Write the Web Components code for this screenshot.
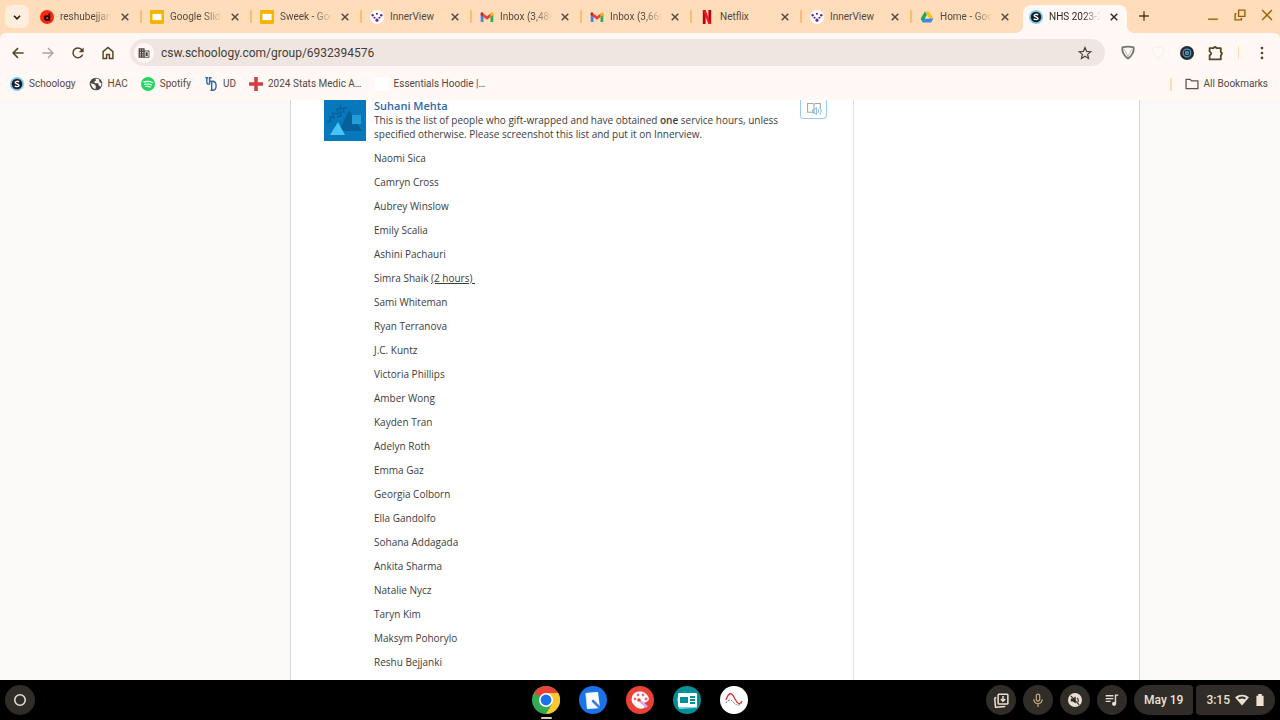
<!DOCTYPE html>
<html lang="en">
<head>
<meta charset="utf-8">
<title>NHS 2023-2024</title>
<style>
html,body{margin:0;height:100%}
body{font-family:Roboto,"Liberation Sans",sans-serif;font-size:10px;color:#54483f;overflow:hidden}
</style>
</head>
<body>
<desktop-screen></desktop-screen>
<script>
const schoology='<circle cx="10" cy="10" r="10" fill="#7ccdf0"/><circle cx="10" cy="10" r="7.600" fill="#181d26"/><path d="M13 7.200C11.500 5.600 7.200 5.900 7.400 8c.2 2 5.400 1.700 5.400 4 0 2.200-4.400 2.300-6.100.600" fill="none" stroke="#fff" stroke-width="2"/>';
const ICONS={
chevron:'<path d="M5 8l5 5 5-5" fill="none" stroke="#241a12" stroke-width="2.600"/>',
close:'<path d="M4.500 4.500l11 11m0-11l-11 11" stroke="currentColor" stroke-width="2.400"/>',
plus:'<path d="M10 2v16M2 10h16" stroke="#4d3820" stroke-width="2.200"/>',
doordash:'<circle cx="10" cy="10" r="10" fill="#ff2a0c"/><path d="M12.200 4.500h2.500v11H9.500a4 4 0 0 1 0-8h2.700zM11.700 10H10a1.500 1.500 0 0 0 0 3h1.700z" fill="#1c0502" fill-rule="evenodd"/>',
slides:'<rect width="20" height="20" rx="2" fill="#f5b400"/><rect x="3.500" y="5.500" width="13" height="9" fill="#fff"/>',
inner:'<circle cx="10" cy="10" r="10" fill="#fff"/><g fill="#65249b"><circle cx="3.800" cy="7.500" r="1.700"/><circle cx="16.200" cy="7.500" r="1.700"/><circle cx="10" cy="5.500" r="1.500"/><circle cx="6.500" cy="11" r="1.500"/><circle cx="13.500" cy="11" r="1.500"/><circle cx="10" cy="14.500" r="2.200"/></g>',
gmail:'<path d="M1 5v12h4V8z" fill="#4285f4"/><path d="M15 8v9h4V5z" fill="#34a853"/><path d="M1 5v2l4 3V5L3.500 3.500C2 3 1 4 1 5z" fill="#c5221f"/><path d="M15 5v5l4-3V5c0-1-1-2-2.500-1.500z" fill="#fbbc04"/><path d="M5 5l5 4 5-4v5l-5 4-5-4z" fill="#ea4335"/>',
netflix:'<path d="M4 0h4v20H4zM12 0h4v20h-4z" fill="#b1060f"/><path d="M4 0h4l8 20h-4z" fill="#f01723"/>',
drive:'<path d="M7 2h6l6 10h-6z" fill="#fcc01d"/><path d="M4 12h15l-3 6H4l-3-6z" fill="#4285f4"/><path d="M7 2l3 5-6 11-3-6z" fill="#22a565"/><path d="M10 7l3 5H7z" fill="#ffddba"/>',
schoology,
minimize:'<path d="M3 16h14" stroke="#9a6100" stroke-width="2"/>',
restore:'<path d="M8 3h9v9H8zM3 8v9h9v-3M3 8h2" fill="none" stroke="#9a6100" stroke-width="2"/>',
closewin:'<path d="M3 3l14 14M17 3L3 17" stroke="#9a6100" stroke-width="2"/>',
back:'<path d="M18 10H3M10 3l-7 7 7 7" fill="none" stroke="#584326" stroke-width="2.200"/>',
forward:'<path d="M2 10h15M10 3l7 7-7 7" fill="none" stroke="#aaa19b" stroke-width="2"/>',
reload:'<path d="M16.500 12A7 7 0 1 1 15 5l2 2" fill="none" stroke="#584326" stroke-width="2.200"/><path d="M18 2v7h-7z" fill="#584326"/>',
home:'<path d="M3 8l7-6 7 6v10h-5v-6H8v6H3z" fill="none" stroke="#584326" stroke-width="2.100"/>',
site:'<path d="M1 2h10v4h8v12H1z" fill="#4a4440"/><path d="M3 5h2m2 0h2M3 9h2m2 0h2M3 12h2m2 0h2M3 15h2m2 0h2m3-7h5v8h-5z" stroke="#fff8f5" stroke-width="1.500" fill="none"/><path d="M13 11h2m-2 3h2" stroke="#4a4440" stroke-width="1.500"/>',
star:'<path d="M10 2l2.300 5.600 6 .5-4.600 3.900 1.400 5.900L10 14.700l-5.100 3.200L6.300 12 1.700 8.100l6-.5z" fill="none" stroke="#4e453f" stroke-width="1.700"/>',
shield:'<path d="M3 3q7-2 14 0c1 6-3 11-7 14C6 14 2 9 3 3z" fill="none" stroke="#77736f" stroke-width="2.300"/><path d="M5 5l5 9 5-9" fill="none" stroke="#b9b4b0"/>',
ghost:'<path d="M3 5q7-6 14 0 1 6-7 12Q2 11 3 5z" fill="none" stroke="#f5f2ef" stroke-width="2"/>',
target:'<circle cx="10" cy="10" r="10" fill="#262b32"/><circle cx="10" cy="10" r="5.500" fill="none" stroke="#4d9bc0" stroke-width="1.700"/><circle cx="10" cy="10" r="2" fill="none" stroke="#68b9de" stroke-width="1.600"/>',
puzzle:'<path d="M2 4h5q1-3 4 0h5v5q3 1 0 4v5H2v-5q4-2 0-5z" fill="none" stroke="#584326" stroke-width="2.200" stroke-linejoin="round"/>',
dots:'<g fill="#584326"><circle cx="10" cy="3" r="1.900"/><circle cx="10" cy="10" r="1.900"/><circle cx="10" cy="17" r="1.900"/></g>',
globe:'<circle cx="10" cy="10" r="9" fill="#45474a"/><path d="M2 9l5 1 3 3-1 5-4-3zM9 2l1 3-3 2 2 2 4 0 1 3 3 2 1-5-3-2-1-4z" fill="#fff4ef"/>',
spotify:'<circle cx="10" cy="10" r="10" fill="#1ed760"/><path d="M4 7q7-2 12 1M5 10.500q6-1.500 10 1M6 13.500q4-1 7.500 1" fill="none" stroke="#fff" stroke-width="1.600" stroke-linecap="round"/>',
ud:'<path d="M2 1h4M4 1v6q0 4 4 3V1M7 1h4M9 6h3c7 0 7 13 0 13H9m2-13v13" fill="none" stroke="#2c68ad" stroke-width="2"/>',
cross:'<path d="M7.500 0h5v7.500H20v5h-7.500V20h-5v-7.500H0v-5h7.500z" fill="#cf3f46"/>',
blank:'<rect width="20" height="20" rx="2" fill="#fff"/>',
folder:'<path d="M1.500 3.500h6l2 2h9v11h-17z" fill="none" stroke="#5e544e" stroke-width="1.800" stroke-linejoin="round"/>',
reader:'<path d="M10 4v11l-2-1H2V3h6zM10 4l2-1h6v6" fill="none" stroke="#aaa6a2" stroke-width="1.300"/><path d="M8 11h2l3-3v9l-3-3H8zM15 10q2 2 0 5m2-7q4 4 0 9" fill="none" stroke="#7eb7e5" stroke-width="1.200"/>',
avatar:'<rect width="42" height="41" fill="#0878bc"/><path d="M25 10L38 31H15z" fill="#06619b"/><path d="M14 22L21 35H6z" fill="#47c3f7"/><path d="M28 15h9v9h-9z" fill="#239cd8"/><path d="M3 22l4-1-1-4 4 1-1-5 5 1-1-5 4 0-1-4M13 17l4-1-1-4 4 0-1-4 4 0" fill="none" stroke="#075f99" stroke-width="1.300"/>',
chrome:'<circle cx="14" cy="14" r="14" fill="#34a853"/><path d="M14 14L2 7a14 14 0 0 1 24.200 0z" fill="#ea4335"/><path d="M14 7h12.200A14 14 0 0 1 14 28l6-10z" fill="#fbc72f"/><circle cx="14" cy="14" r="7" fill="#fff"/><circle cx="14" cy="14" r="5.400" fill="#1a73e8"/>',
notes:'<circle cx="14" cy="14" r="14" fill="#1a73e8"/><path d="M6 7l12-1 3 16-13 1z" fill="#8db9f8"/><path d="M7 7l12-1 2 16-13 1z" fill="#f7faff"/><path d="M14 15l6 6" stroke="#3c7ddb" stroke-width="2.500" stroke-linecap="round"/>',
palette:'<circle cx="14" cy="14" r="14" fill="#ea4035"/><path d="M6 11c1-5 8-7 13-4 5 4 5 8 1 9-3 1-2 2-1 4 1 3-7 4-10 0-3-3-4-5-3-9z" fill="#fff"/><g fill="#ef6a7c"><circle cx="12" cy="9" r="1.400"/><circle cx="9" cy="13" r="1.400"/><circle cx="17" cy="9" r="1.400"/><circle cx="20" cy="13" r="1.400"/></g><path d="M14 15l7 6" stroke="#dca4f3" stroke-width="2.500"/><circle cx="13" cy="14" r="1.800" fill="#ea4035"/>',
card:'<circle cx="14" cy="14" r="14" fill="#009198"/><path d="M4 12l19-3 1 13-18 1z" fill="#80d0f1"/><rect x="5" y="7" width="19" height="14" rx="1" fill="#fff"/><path d="M7 11h8v6H7zM17 10h5v2h-5zM17 13h5v2h-5zM17 16h5v2h-5z" fill="#009198"/>',
graph:'<circle cx="14" cy="14" r="14" fill="#fff"/><path d="M6 14q4-12 9-1 4 8 7 2" fill="none" stroke="#d83030" stroke-width="1.300"/><path d="M6 17q4-6 8 0 4 4 8 0" fill="none" stroke="#777" stroke-dasharray="2 1"/>',
ring:'<circle cx="10" cy="10" r="7.500" fill="none" stroke="#e8dfd2" stroke-width="2.200"/>',
holding:'<rect x="5.500" y="1.500" width="13" height="13" rx="1" fill="none" stroke="#eee1d2" stroke-width="2"/><path d="M3 6l-2 1 1 12 13-1M12 4v6m-3-2l3 3 3-3" fill="none" stroke="#eee1d2" stroke-width="2"/>',
mic:'<rect x="7.500" y="1.500" width="5" height="10" rx="2.500" fill="none" stroke="#c8ae7e" stroke-width="1.700"/><path d="M4 9q0 6 6 6t6-6M10 15v5" fill="none" stroke="#c8ae7e" stroke-width="1.700"/>',
mute:'<circle cx="10" cy="10" r="10" fill="#e9dfd4"/><path d="M4 8h3l4-3v10l-4-3H4z" fill="#302c28"/><path d="M4 4l12 13M13 7q3 3 1 6" stroke="#302c28" stroke-width="1.500" fill="none"/>',
queue:'<path d="M1 4h11M1 8h11M1 12h7M15 15V3h4" fill="none" stroke="#e9dfd4" stroke-width="2"/><circle cx="13" cy="15.500" r="3" fill="#e9dfd4"/>',
wifi:'<path d="M0 6Q10-1 20 6L10 18z" fill="#eee1d2"/><path d="M4 7q6-4 12 0l-2 2q-4-2-8 0z" fill="#302c28"/>',
battery:'<path d="M7 0h6v3h3v17H4V3h3z" fill="#eee1d2"/>'
};
function component(name,css,markup){
  const t=document.createElement('template');
  t.innerHTML=`<style>*{box-sizing:border-box}button{font:inherit;color:inherit;background:none;border:0;padding:0;margin:0}${css}</style>${markup}`;
  customElements.define(name,class extends HTMLElement{
    constructor(){
      super();
      this.attachShadow({mode:'open'}).append(t.content.cloneNode(true));
    }
  });
}
customElements.define('ui-icon',class extends HTMLElement{
  connectedCallback(){
    if(this.shadowRoot)return;
    const w=this.getAttribute('size')||14,box=this.getAttribute('box')||'0 0 20 20';
    const [, , bw, bh]=box.split(' ').map(Number);
    this.attachShadow({mode:'open'}).innerHTML=`<style>:host{display:block;flex:none}svg{display:block}</style><svg aria-hidden="true" width="${w}" height="${Math.round(w*bh/bw)}" viewBox="${box}">${ICONS[this.getAttribute('name')]}</svg>`;
  }
});
customElements.define('browser-tab',class extends HTMLElement{
  connectedCallback(){
    if(this.shadowRoot)return;
    const on=this.hasAttribute('active');
    this.attachShadow({mode:'open'}).innerHTML=`<style>
    :host{display:flex;position:relative;align-items:center;flex:0 1 110px;min-width:0;height:28px;padding:0 10px 5px 9px;box-sizing:border-box}
    :host([divided])::before{content:"";position:absolute;left:-1px;top:5px;width:2px;height:13px;background:#fdbb70;border-radius:1px}
    :host([active]){background:#fff8f5;border-radius:8px 8px 0 0;flex-basis:104px;margin-left:2px;padding:0 7px 5px 6px;color:#32271f}
    :host([active])::before,:host([active])::after{content:"";position:absolute;bottom:0;width:8px;height:8px;background:radial-gradient(circle at 0 0,transparent 8px,#fff8f5 8px)}
    :host([active])::before{left:-8px}:host([active])::after{right:-8px;background:radial-gradient(circle at 100% 0,transparent 8px,#fff8f5 8px)}
    button{font:inherit;color:inherit;background:none;border:0;padding:0}
    .t{display:flex;align-items:center;gap:6px;flex:1;min-width:0;text-align:left}
    .t span{flex:1;white-space:nowrap;overflow:hidden;line-height:14px}
    :host([plain]) .t span{-webkit-mask-image:none}
    .t span.fade{-webkit-mask-image:linear-gradient(90deg,#000 calc(100% - 18px),transparent)}
    .c{margin-left:7px}</style>
    <button class="t" role="tab" aria-selected="${on}"><ui-icon name="${this.getAttribute('icon')}"></ui-icon><span><slot></slot></span></button>
    <button class="c" aria-label="Close tab"><ui-icon name="close" size="12"></ui-icon></button>`;
    const label=this.shadowRoot.querySelector('span');
    new ResizeObserver(()=>label.classList.toggle('fade',label.scrollWidth>label.clientWidth)).observe(label);
  }
});
component('tab-strip',`:host{display:flex;height:33px;padding:5px 6px 0 5px;background:#ffddba;box-sizing:border-box}
.menu{width:24px;height:23px;border-radius:7px;background:#ffeedd;display:grid;place-items:center;margin-right:2px;flex:none}
.tabs{display:flex;flex:0 1 1096px;min-width:0}.new{align-self:flex-start;padding:5px 11px}
.win{display:flex;gap:13px;margin-left:auto;align-self:flex-start;padding-top:3px}`,
`<button class="menu" aria-label="Search tabs"><ui-icon name="chevron" size="12"></ui-icon></button>
<div class="tabs" role="tablist">
<browser-tab icon="doordash">reshubejjanki</browser-tab><browser-tab divided icon="slides">Google Slides</browser-tab><browser-tab divided icon="slides">Sweek - Google</browser-tab><browser-tab divided icon="inner">InnerView</browser-tab><browser-tab divided icon="gmail">Inbox (3,486)</browser-tab><browser-tab divided icon="gmail">Inbox (3,666)</browser-tab><browser-tab divided icon="netflix">Netflix</browser-tab><browser-tab divided icon="inner">InnerView</browser-tab><browser-tab divided icon="drive">Home - Google</browser-tab><browser-tab active icon="schoology">NHS 2023-2024</browser-tab>
</div><button class="new" aria-label="New tab"><ui-icon name="plus" size="12"></ui-icon></button>
<div class="win"><button aria-label="Minimize"><ui-icon name="minimize"></ui-icon></button><button aria-label="Restore"><ui-icon name="restore"></ui-icon></button><button aria-label="Close window"><ui-icon name="closewin"></ui-icon></button></div>`);
component('address-bar',`:host{display:flex;align-items:center;height:39px;padding:0 11px;background:#fff8f5;border-radius:6px 6px 0 0;box-sizing:border-box}
.nav,.ext{display:flex;align-items:center;gap:16px}.box{display:flex;align-items:center;flex:1;height:27px;margin:0 15px;padding:0 13px 0 4px;background:#efe6e1;border-radius:14px}
.site{width:20px;height:20px;border-radius:50%;background:#fff8f5;display:grid;place-items:center;margin-right:7px}
input{flex:1;min-width:0;border:0;padding:0;background:none;font:12px/20px Roboto,sans-serif;color:#453d38;height:20px}
i{width:1px;height:13px;background:#ffddba}.ext{gap:14px}.sep{display:flex;align-items:center;gap:16px}`,
`<div class="nav"><button aria-label="Back"><ui-icon name="back"></ui-icon></button><button aria-label="Forward"><ui-icon name="forward"></ui-icon></button><button aria-label="Reload"><ui-icon name="reload"></ui-icon></button><button aria-label="Home"><ui-icon name="home"></ui-icon></button></div>
<div class="box"><button class="site" aria-label="Site information"><ui-icon name="site" size="12"></ui-icon></button><input aria-label="Address" value="csw.schoology.com/group/6932394576"><button aria-label="Bookmark this page"><ui-icon name="star"></ui-icon></button></div>
<div class="ext"><button aria-label="Shield extension"><ui-icon name="shield" size="16"></ui-icon></button><button aria-label="Extension"><ui-icon name="ghost" size="16"></ui-icon></button><button aria-label="Reader extension"><ui-icon name="target"></ui-icon></button><button aria-label="Extensions"><ui-icon name="puzzle" size="16"></ui-icon></button><div class="sep"><i></i><button aria-label="Menu"><ui-icon name="dots"></ui-icon></button></div></div>`);
component('bookmark-link',`:host{display:block}a{display:flex;align-items:center;gap:5px;color:inherit;text-decoration:none;line-height:14px;white-space:nowrap}`,
`<a href="#"><slot name="icon"></slot><span><slot></slot></span></a>`);
component('bookmark-bar',`:host{display:flex;align-items:center;height:28px;gap:13px;padding:0 12px 4px 10px;background:#fff8f5;box-sizing:border-box}i{width:2px;height:13px;background:#ffddba;margin-left:auto}`,
['schoology:Schoology','globe:HAC','spotify:Spotify','ud:UD','cross:2024 Stats Medic A…','blank:Essentials Hoodie |…'].map(s=>{const [a,b]=s.split(':');return `<bookmark-link><ui-icon slot="icon" name="${a}"></ui-icon>${b}</bookmark-link>`}).join('')+`<i></i><bookmark-link><ui-icon slot="icon" name="folder"></ui-icon>All Bookmarks</bookmark-link>`);
component('group-post',`:host{display:grid;grid-template-columns:42px minmax(0,1fr) 27px;column-gap:8px;padding:0 26px 0 33px;align-items:start;font:10px/14px "Open Sans",sans-serif;color:#3c3c3c}
h2{margin:0 0 2px;font-size:11px;line-height:11px;font-weight:600}h2 a{color:#3069a8;text-decoration:none}b{font-weight:600}
.body{padding-right:6px}.body p{margin:0}ul{list-style:none;margin:10px 0 0;padding:0;display:grid;gap:10px}
.read{height:19px;border:1px solid #9accf3;border-top:0;border-radius:0 0 4px 4px;display:grid;place-items:center}`,
`<ui-icon name="avatar" size="42" box="0 0 42 41"></ui-icon><div class="body"><h2><a href="#">Suhani Mehta</a></h2><p>This is the list of people who gift-wrapped and have obtained <b>one</b> service hours, unless specified otherwise. Please screenshot this list and put it on Innerview.</p>
<ul>${['Naomi Sica','Camryn Cross','Aubrey Winslow','Emily Scalia','Ashini Pachauri','Simra Shaik <u>(2 hours)&nbsp;</u>','Sami Whiteman','Ryan Terranova','J.C. Kuntz','Victoria Phillips','Amber Wong','Kayden Tran','Adelyn Roth','Emma Gaz','Georgia Colborn','Ella Gandolfo','Sohana Addagada','Ankita Sharma','Natalie Nycz','Taryn Kim','Maksym Pohorylo','Reshu Bejjanki'].map(n=>`<li>${n}</li>`).join('')}</ul></div>
<button class="read" aria-label="Read aloud"><ui-icon name="reader" size="16"></ui-icon></button>`);
component('group-page',`:host{display:grid;grid-template-columns:29fr minmax(0,850px) 14fr;flex:1;min-height:0;overflow:hidden;background:#faf9f7}
main{grid-column:2;display:grid;grid-template-columns:minmax(0,1fr) 286px;background:#fff;border:solid #d5d5d5;border-width:0 1px}aside{border-left:1px solid #e2e2e2}`,
`<main><group-post></group-post><aside></aside></main>`);
component('system-shelf',`:host{display:grid;grid-template-columns:1fr auto 1fr;align-items:center;height:40px;background:#000;color:#eee1d2;padding:0 5px;box-sizing:border-box;font-size:12px;font-weight:500}
button{background:#302c28;height:30px;border-radius:15px;display:flex;align-items:center;justify-content:center}.round{width:30px}.apps{display:flex;gap:19px}.apps button{position:relative;background:none;width:28px;height:28px}
.open::after{content:"";position:absolute;left:9px;bottom:-5px;width:11px;height:2px;background:#d5cabd;border-radius:1px}
.tray{display:flex;justify-content:flex-end;gap:7px}.duo{display:flex;gap:3px}.date{padding:0 10px;border-radius:15px 4px 4px 15px}.status{padding:0 9px 0 10px;gap:5px;border-radius:4px 15px 15px 4px}`,
`<button class="round" aria-label="Launcher"><ui-icon name="ring"></ui-icon></button>
<nav class="apps"><button class="open" aria-label="Chrome"><ui-icon name="chrome" size="28" box="0 0 28 28"></ui-icon></button><button aria-label="Cursive"><ui-icon name="notes" size="28" box="0 0 28 28"></ui-icon></button><button aria-label="Canvas"><ui-icon name="palette" size="28" box="0 0 28 28"></ui-icon></button><button aria-label="News"><ui-icon name="card" size="28" box="0 0 28 28"></ui-icon></button><button aria-label="Graphing calculator"><ui-icon name="graph" size="28" box="0 0 28 28"></ui-icon></button></nav>
<div class="tray"><button class="round" aria-label="Holding space"><ui-icon name="holding" size="15"></ui-icon></button><button class="round" aria-label="Microphone"><ui-icon name="mic"></ui-icon></button><button class="round" aria-label="Muted"><ui-icon name="mute"></ui-icon></button><button class="round" aria-label="Media"><ui-icon name="queue"></ui-icon></button><div class="duo"><button class="date">May 19</button><button class="status"><span>3:15</span><ui-icon name="wifi"></ui-icon><ui-icon name="battery" size="12"></ui-icon></button></div></div>`);
component('desktop-screen',`:host{display:flex;flex-direction:column;height:100vh}header{background:#ffddba;flex:none}`,
`<header><tab-strip></tab-strip><address-bar></address-bar><bookmark-bar></bookmark-bar></header><group-page></group-page><system-shelf></system-shelf>`);
</script>
</body>
</html>
